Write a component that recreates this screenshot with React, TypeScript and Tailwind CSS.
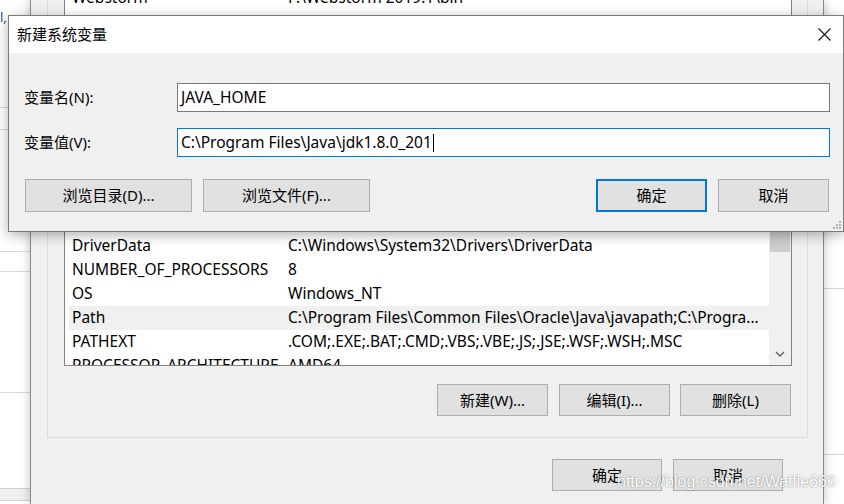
import clsx from "clsx";

const sysVars = [
  { name: "DriverData", value: "C:\\Windows\\System32\\Drivers\\DriverData" },
  { name: "NUMBER_OF_PROCESSORS", value: "8" },
  { name: "OS", value: "Windows_NT" },
  {
    name: "Path",
    value: "C:\\Program Files\\Common Files\\Oracle\\Java\\javapath;C:\\Progra...",
    selected: true,
  },
  { name: "PATHEXT", value: ".COM;.EXE;.BAT;.CMD;.VBS;.VBE;.JS;.JSE;.WSF;.WSH;.MSC" },
  { name: "PROCESSOR_ARCHITECTURE", value: "AMD64" },
];

function Btn({
  children,
  className,
  primary,
}: {
  children: React.ReactNode;
  className?: string;
  primary?: boolean;
}) {
  return (
    <div
      className={clsx(
        "flex items-center justify-center bg-[#e1e1e1] text-[15px] leading-none shrink-0",
        primary ? "border-2 border-[#0078d7]" : "border border-[#adadad]",
        className
      )}
    >
      {children}
    </div>
  );
}

function VarRow({ name, value, selected }: { name: string; value: string; selected?: boolean }) {
  return (
    <div
      className={clsx(
        "h-[24px] shrink-0 flex items-center ml-[4px] pl-[3px] whitespace-nowrap overflow-hidden text-[15.5px]",
        selected && "bg-[#f0f0f0]"
      )}
    >
      <span className="w-[216px] shrink-0">{name}</span>
      <span>{value}</span>
    </div>
  );
}

export default function App() {
  return (
    <div className="relative w-[844px] h-[504px] overflow-hidden bg-white flex font-['Noto_Sans','Noto_Sans_CJK_SC',sans-serif] text-black text-[15px]">
      {/* window further back, left */}
      <div className="w-[30px] shrink-0 flex flex-col bg-white">
        <div className="h-[107px] pt-[9px] text-[13px] leading-[16px] text-[#1b4fa8]">l,</div>
        <div className="h-[22px] border-t border-[#dadada]" />
        <div className="h-[122px] border-t border-[#dadada]" />
        <div className="h-[20px] border-t border-[#dadada]" />
        <div className="h-[121px] border-t border-[#dadada]" />
        <div className="h-[96px] border-t border-[#dadada]" />
        <div className="h-[13px] border-y border-[#d0d0d0] bg-[#f0f0f0]" />
      </div>

      {/* environment variables window */}
      <div className="relative z-10 w-[794px] shrink-0 bg-[#f0f0f0] border-x border-[#8a8a8a] shadow-[0_0_10px_rgba(0,0,0,0.25)] flex flex-col">
        <div className="ml-[16px] mr-[15px] h-[438px] border-x border-b border-[#dcdcdc] pl-[16px] pr-[15px] flex flex-col">
          <div className="h-[366px] border-x border-b border-[#828282] bg-white flex flex-col">
            <div className="h-[231px] shrink-0 overflow-hidden flex flex-col">
              <div className="-mt-[14px]">
                <VarRow name="Webstorm" value="F:\Webstorm 2019.1\bin" />
              </div>
            </div>
            <div className="flex-1 min-h-0 flex overflow-hidden">
              <div className="flex-1 min-w-0 pt-[3px] flex flex-col overflow-hidden">
                {sysVars.map((v) => (
                  <VarRow key={v.name} {...v} />
                ))}
              </div>
              <div className="w-[22px] shrink-0 bg-[#f0f0f0] flex flex-col">
                <div className="h-[21px] mx-[1px] bg-[#cdcdcd]" />
                <div className="flex-1" />
                <svg width="10" height="6" viewBox="0 0 10 6" className="self-center mb-[8px]">
                  <polyline points="1,1 5,5 9,1" fill="none" stroke="#606060" strokeWidth="1.4" />
                </svg>
              </div>
            </div>
          </div>
          <div className="mt-[18px] mr-[1px] flex justify-end">
            <Btn className="w-[111px] h-[32px]">新建(W)...</Btn>
            <Btn className="w-[111px] h-[32px] ml-[11px]">编辑(I)...</Btn>
            <Btn className="w-[111px] h-[32px] ml-[10px]">删除(L)</Btn>
          </div>
        </div>
        <div className="mt-[21px] pr-[40px] flex justify-end gap-[11px]">
          <Btn className="w-[110px] h-[32px]">确定</Btn>
          <Btn className="w-[110px] h-[32px]">取消</Btn>
        </div>
      </div>

      {/* window further back, right */}
      <div className="flex-1 flex flex-col bg-white">
        <div className="h-[288px]" />
        <div className="h-[166px] border-t border-[#d6d6d6]" />
        <div className="flex-1 border-t border-[#d6d6d6]" />
      </div>

      {/* 新建系统变量 dialog */}
      <div className="absolute left-[8px] top-[15px] w-[836px] h-[217px] z-20 bg-[#f0f0f0] border border-[#7a7a7a] shadow-[0_3px_12px_rgba(0,0,0,0.3)] flex flex-col">
        <div className="h-[37px] shrink-0 bg-white flex items-center justify-between pl-[8px] pr-[12px]">
          <span className="text-[15px]">新建系统变量</span>
          <svg width="13" height="13" viewBox="0 0 13 13">
            <path d="M0.5 0.5 L12.5 12.5 M12.5 0.5 L0.5 12.5" stroke="#111" strokeWidth="1.1" />
          </svg>
        </div>
        <div className="flex-1 pl-[15px] pr-[13px] pt-[30px] flex flex-col">
          <div className="flex items-center">
            <span className="w-[153px] shrink-0">变量名(N):</span>
            <div className="w-[653px] h-[29px] border border-[#7a7a7a] bg-white flex items-center pl-[3px] text-[15.5px]">
              JAVA_HOME
            </div>
          </div>
          <div className="mt-[16px] flex items-center">
            <span className="w-[153px] shrink-0">变量值(V):</span>
            <div className="w-[653px] h-[29px] border border-[#0078d7] bg-white flex items-center pl-[3px] text-[15.5px]">
              <span>C:\Program Files\Java\jdk1.8.0_201</span>
              <span className="w-px h-[18px] bg-black ml-[1px]" />
            </div>
          </div>
          <div className="mt-[22px] flex items-center">
            <Btn className="w-[167px] h-[33px] ml-[1px]">浏览目录(D)...</Btn>
            <Btn className="w-[167px] h-[33px] ml-[11px]">浏览文件(F)...</Btn>
            <div className="flex-1" />
            <Btn primary className="w-[111px] h-[33px]">确定</Btn>
            <Btn className="w-[111px] h-[33px] ml-[11px] mr-[1px]">取消</Btn>
          </div>
        </div>
        <svg width="8" height="8" viewBox="0 0 8 8" className="absolute right-[2px] bottom-[2px]">
          <rect x="6" y="0" width="2" height="2" fill="#b4b4b4" />
          <rect x="3" y="3" width="2" height="2" fill="#b4b4b4" />
          <rect x="6" y="3" width="2" height="2" fill="#b4b4b4" />
          <rect x="0" y="6" width="2" height="2" fill="#b4b4b4" />
          <rect x="3" y="6" width="2" height="2" fill="#b4b4b4" />
          <rect x="6" y="6" width="2" height="2" fill="#b4b4b4" />
        </svg>
      </div>

      {/* watermark */}
      <div className="absolute left-[617px] top-[472px] z-30 text-[16px] leading-[20px] font-['Liberation_Sans',sans-serif] text-white [text-shadow:0_0_1.5px_rgba(0,0,0,0.55)] whitespace-nowrap">
        https://blog.csdn.net/Waffle666
      </div>
    </div>
  );
}
